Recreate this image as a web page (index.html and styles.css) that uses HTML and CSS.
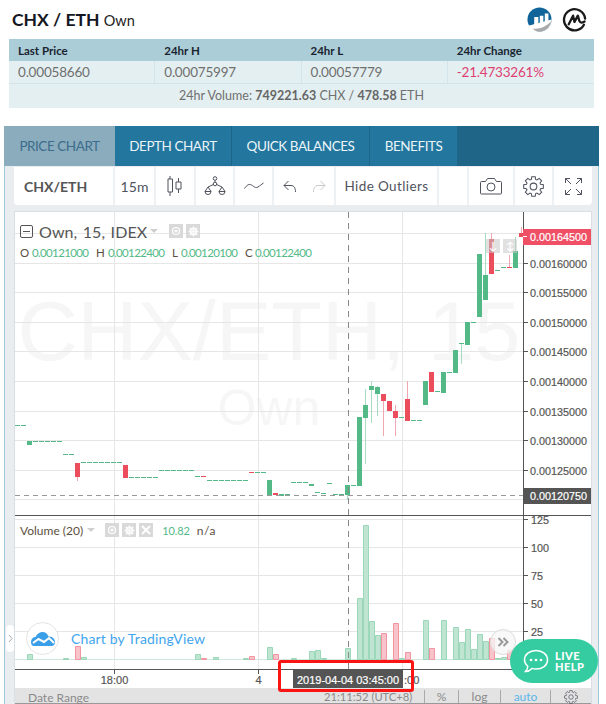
FILE: index.html
```html
<!DOCTYPE html>
<html lang="en">
<head>
<meta charset="utf-8">
<title>CHX / ETH</title>
<link rel="stylesheet" href="styles.css">
</head>
<body>
<svg class="defs" width="0" height="0" aria-hidden="true">
  <symbol id="gear" viewBox="-10 -10 20 20">
    <path d="M6.7-2.05 9.36-1.65 9.36 1.65 6.7 2.05 6.19 3.29 7.78 5.45 5.45 7.78 3.29 6.19 2.05 6.7 1.65 9.36-1.65 9.36-2.05 6.7-3.29 6.19-5.45 7.78-7.78 5.45-6.19 3.29-6.7 2.05-9.36 1.65-9.36-1.65-6.7-2.05-6.19-3.29-7.78-5.45-5.45-7.78-3.29-6.19-2.05-6.7-1.65-9.36 1.65-9.36 2.05-6.7 3.29-6.19 5.45-7.78 7.78-5.45 6.19-3.29Z"/>
    <circle r="3.2"/>
  </symbol>
</svg>

<header class="title-bar">
  <h1 class="pair">CHX / ETH <span class="pair-name">Own</span></h1>
  <div class="logos">
    <svg class="logo" viewBox="0 0 26 26">
      <circle cx="13" cy="13" r="12.5" fill="#0f6499"/>
      <path d="M1.500 19.500 25.500 13C25.500 20 20 25.600 13 25.600 8 25.600 3.800 23.500 1.500 19.500Z" fill="#fff"/>
      <path d="M6 22.300C13 23.500 20 20.500 25.300 14.500 24 21 19 25.700 13 25.700 10 25.700 7.800 24.300 6 22.300Z" fill="#a9a9a9"/>
      <path d="M7.500 10.500h4.300v8.500h-4.300zM13.300 9h3.700v9h-3.700zM18.500 6.800h3.800v10h-3.800z" fill="#fff"/>
    </svg>
    <svg class="logo" viewBox="0 0 26 26">
      <path d="M22.800 18.500A11 11 0 1 1 24 12" fill="none" stroke="#1a1a1a" stroke-width="2.400" stroke-linecap="round"/>
      <path d="M7 18 11.500 9 13 15.500 16.500 9 18 14.500 C19 17 21 16.500 23.500 15" fill="none" stroke="#1a1a1a" stroke-width="2.400" stroke-linejoin="round" stroke-linecap="round"/>
    </svg>
  </div>
</header>

<section class="stats">
  <div class="stat-head">Last Price</div>
  <div class="stat-head">24hr H</div>
  <div class="stat-head">24hr L</div>
  <div class="stat-head">24hr Change</div>
  <div class="stat-val">0.00058660</div>
  <div class="stat-val">0.00075997</div>
  <div class="stat-val">0.00057779</div>
  <div class="stat-val stat-neg">-21.4733261%</div>
  <div class="stat-vol">24hr Volume: <b>749221.63</b> CHX / <b>478.58</b> ETH</div>
</section>

<nav class="tabs">
  <a class="tab tab-active">PRICE CHART</a>
  <a class="tab tab-depth">DEPTH CHART</a>
  <a class="tab tab-quick">QUICK BALANCES</a>
  <a class="tab tab-benefits">BENEFITS</a>
</nav>

<main class="panel">
  <div class="toolbar">
    <div class="tool tool-symbol">CHX/ETH</div>
    <div class="tool tool-interval">15m</div>
    <div class="tool tool-candle">
      <svg width="16" height="20" viewBox="0 0 16 20" class="ico"><path d="M3 0v3M3 16v4M1 3h4.500v13H1zM11.500 2v4M11.500 13v4M9 6h5v7H9z"/></svg>
    </div>
    <div class="tool tool-compare">
      <svg width="24" height="20" viewBox="0 0 24 20" class="ico"><circle cx="12" cy="2.500" r="1.800"/><circle cx="12" cy="8" r="1.800"/><path d="M12 4.300v1.900M10.400 8.500 5 11M13.600 8.500 19 11M5 11 2 15.500M5 11 8 15.500M19 11 16 15.500M19 11 22 15.500M2 15.500h6a3 3 0 0 1-6 0ZM16 15.500h6a3 3 0 0 1-6 0Z"/></svg>
    </div>
    <div class="tool tool-style">
      <svg width="20" height="8" viewBox="0 0 20 8" class="ico"><path d="M.5 6.500C3 3 5 1.500 7.500 3s4 3.500 6.500 2S17 2.500 19.500 1"/></svg>
    </div>
    <div class="tool tool-history">
      <svg width="14" height="13" viewBox="0 0 14 13" class="ico"><path d="M5.500 1 1 5.500 5.500 10M1 5.500h7c3 0 4.500 2.500 4.500 6.500"/></svg>
      <svg width="14" height="13" viewBox="0 0 14 13" class="ico ico-off"><path d="M8.500 1 13 5.500 8.500 10M13 5.500H6C3 5.500 1.500 8 1.500 12"/></svg>
    </div>
    <div class="tool tool-outliers">Hide Outliers</div>
    <div class="tool tool-blank"></div>
    <div class="tool tool-camera">
      <svg width="22" height="18" viewBox="0 0 22 18" class="ico"><path d="M1.500 4.500h4l2-3h7l2 3h4a1 1 0 0 1 1 1v10.500a1 1 0 0 1-1 1h-19a1 1 0 0 1-1-1V5.500a1 1 0 0 1 1-1Z"/><circle cx="11" cy="10" r="4"/></svg>
    </div>
    <div class="tool tool-gear">
      <svg width="21" height="21" class="ico"><use href="#gear"/></svg>
    </div>
    <div class="tool tool-full">
      <svg width="17" height="17" viewBox="0 0 17 17" class="ico"><path d="M.5 5V.5H5M.5.500 6 6M12 .5h4.500V5M16.500.5 11 6M.5 12v4.500H5M.5 16.500 6 11M16.500 12v4.500H12M16.500 16.500 11 11"/></svg>
    </div>
  </div>

  <div class="chart">
    <svg class="plot" width="576" height="477" viewBox="15 212 576 477">
      <text class="wm wm-big" x="269" y="360">CHX/ETH, 15</text>
      <text class="wm wm-small" x="269" y="425">Own</text>

      <path class="grid" d="M15 233h508v1H15zM15 263h508v1H15zM15 292h508v1H15zM15 322h508v1H15zM15 351h508v1H15zM15 381h508v1H15zM15 411h508v1H15zM15 440h508v1H15zM15 470h508v1H15zM15 499h508v1H15zM15 519h508v1H15zM15 547h508v1H15zM15 575h508v1H15zM15 603h508v1H15zM15 631h508v1H15zM114 212h1v457h-1zM258 212h1v457h-1zM402 212h1v457h-1z"/>

      <path class="vol-flat" d="M15 659.500h512"/>
      <path class="vol-g" d="M27.500 654.500h5v5h-5zM63.500 658.500h5v1h-5zM81.500 657.500h5v2h-5zM195.500 654.500h5v5h-5zM213.500 657.500h5v2h-5zM243.500 658.500h5v1h-5zM267.500 647.500h5v12h-5zM291.500 658.500h5v1h-5zM309.500 651.500h5v8h-5zM315.500 650.500h5v9h-5zM321.500 658.500h5v1h-5zM345.500 648.500h5v11h-5zM357.500 598.500h5v61h-5zM363.500 525.500h5v134h-5zM369.500 621.500h5v38h-5zM375.500 635.500h5v24h-5zM399.500 658.500h5v1h-5zM423.500 620.500h5v39h-5zM441.500 620.500h5v39h-5zM453.500 627.500h5v32h-5zM459.500 642.500h5v17h-5zM465.500 629.500h5v30h-5zM471.500 649.500h5v10h-5zM477.500 634.500h5v25h-5zM483.500 641.500h5v18h-5zM495.500 658.500h5v1h-5zM501.500 657.500h5v2h-5z"/>
      <path class="vol-r" d="M75.500 646.500h5v13h-5zM201.500 658.500h5v1h-5zM249.500 656.500h5v3h-5zM273.500 654.500h5v5h-5zM381.500 633.500h5v26h-5zM393.500 623.500h5v36h-5zM405.500 652.500h5v7h-5zM429.500 648.500h5v11h-5zM489.500 638.500h5v21h-5zM507.500 650.500h5v9h-5z"/>

      <path class="wick-g" d="M347 495h1v5h-1zM365 389h1v75h-1zM371 381h1v42h-1zM377 386h1v30h-1zM461 343h1v21h-1zM485 233h1v42h-1zM515 237h1v14h-1z"/>
      <path class="wick-r" d="M383 394h1v42h-1zM395 405h1v31h-1zM407 381h1v18h-1zM491 233h1v6h-1zM509 255h1v12h-1zM521 227h1v6h-1zM77 477h1v4h-1z"/>

      <path class="up" d="M15 425h5v1h-5zM21 425h5v1h-5zM27 441h5v4h-5zM33 441h5v1h-5zM39 441h5v1h-5zM45 441h5v1h-5zM51 441h5v1h-5zM57 441h5v1h-5zM63 454h5v1h-5zM69 454h5v1h-5zM81 462h5v1h-5zM87 462h5v1h-5zM93 462h5v1h-5zM99 462h5v1h-5zM105 462h5v1h-5zM111 462h5v1h-5zM117 462h5v1h-5zM129 477h5v1h-5zM135 477h5v1h-5zM141 477h5v1h-5zM147 477h5v1h-5zM153 477h5v1h-5zM159 470h5v1h-5zM165 470h5v1h-5zM171 470h5v1h-5zM177 470h5v1h-5zM183 470h5v1h-5zM189 470h5v1h-5zM195 476h5v1h-5zM207 480h5v1h-5zM213 480h5v1h-5zM219 480h5v1h-5zM225 480h5v1h-5zM231 480h5v1h-5zM237 480h5v1h-5zM243 480h5v1h-5zM255 472h5v1h-5zM261 472h5v1h-5zM267 480h5v15h-5zM279 494h5v2h-5zM285 494h5v1h-5zM291 482h5v1h-5zM297 482h5v1h-5zM303 482h5v1h-5zM309 484h5v2h-5zM315 492h5v1h-5zM321 493h5v1h-5zM327 483h5v1h-5zM333 494h5v1h-5zM339 494h5v1h-5zM345 485h5v10h-5zM351 485h5v1h-5zM357 417h5v69h-5zM363 405h5v13h-5zM369 386h5v4h-5zM375 387h5v7h-5zM399 417h5v1h-5zM411 420h5v1h-5zM417 420h5v1h-5zM423 381h5v24h-5zM435 391h5v1h-5zM441 372h5v21h-5zM447 372h5v1h-5zM453 350h5v23h-5zM459 343h5v1h-5zM465 322h5v23h-5zM471 322h5v1h-5zM477 254h5v63h-5zM483 275h5v25h-5zM495 270h5v1h-5zM501 267h5v1h-5zM513 251h5v17h-5z"/>
      <path class="down" d="M75 463h5v14h-5zM123 465h5v13h-5zM201 476h5v1h-5zM249 472h5v1h-5zM273 493h5v2h-5zM381 394h5v7h-5zM387 401h5v10h-5zM393 411h5v7h-5zM405 399h5v22h-5zM429 372h5v20h-5zM489 239h5v35h-5zM507 267h5v1h-5zM519 233h5v4h-5z"/>

      <path class="dash-h" d="M15 495.500h508"/>
      <path class="dash-v" d="M348.500 212v457"/>

      <path class="axis" d="M15 515h576v1H15zM15 669h508v1H15zM523 212h1v458h-1z"/>
      <path class="axis" d="M524 263h4v1h-4zM524 292h4v1h-4zM524 322h4v1h-4zM524 351h4v1h-4zM524 381h4v1h-4zM524 411h4v1h-4zM524 440h4v1h-4zM524 470h4v1h-4zM524 519h4v1h-4zM524 547h4v1h-4zM524 575h4v1h-4zM524 603h4v1h-4zM524 631h4v1h-4zM114 670h1v4h-1zM258 670h1v4h-1z"/>

      <text class="ax-price" x="530" y="267.500">0.00160000</text>
      <text class="ax-price" x="530" y="296.500">0.00155000</text>
      <text class="ax-price" x="530" y="326.500">0.00150000</text>
      <text class="ax-price" x="530" y="355.500">0.00145000</text>
      <text class="ax-price" x="530" y="385.500">0.00140000</text>
      <text class="ax-price" x="530" y="415.500">0.00135000</text>
      <text class="ax-price" x="530" y="444.500">0.00130000</text>
      <text class="ax-price" x="530" y="474.500">0.00125000</text>
      <rect class="tag-red" x="523" y="229" width="68" height="16"/>
      <path class="tag-tick" d="M523 236h4v1h-4z"/>
      <text class="ax-price ax-light" x="530" y="241">0.00164500</text>
      <rect class="tag-dark" x="523" y="488" width="68" height="16"/>
      <text class="ax-price ax-light" x="530" y="500">0.00120750</text>

      <text class="ax-price" x="531" y="524">125</text>
      <text class="ax-price" x="531" y="552">100</text>
      <text class="ax-price" x="531" y="580">75</text>
      <text class="ax-price" x="531" y="608">50</text>
      <text class="ax-price" x="531" y="636">25</text>

      <text class="ax-time" x="114.500" y="684">18:00</text>
      <text class="ax-time" x="258.500" y="684">4</text>
      <text class="ax-time ax-start" x="404" y="684">:00</text>
      <rect class="tag-dark" x="293" y="670" width="110" height="18"/>
      <text class="ax-time ax-light" x="348" y="684">2019-04-04 03:45:00</text>
    </svg>

    <div class="legend-main">
      <span class="collapse"></span>
      <span class="legend-title">Own, 15, IDEX</span>
      <span class="caret"></span>
      <span class="chip"><svg width="10" height="10" viewBox="0 0 10 10"><circle cx="5" cy="5" r="3.500" class="chip-ring"/><circle cx="5" cy="5" r="1.500" class="chip-dot"/></svg></span>
      <span class="chip"><svg width="11" height="11" class="chip-gear"><use href="#gear"/></svg></span>
    </div>
    <div class="ohlc">
      <span class="ohlc-k ohlc-o">O</span><span class="ohlc-v">0.00121000</span>
      <span class="ohlc-k ohlc-h">H</span><span class="ohlc-v">0.00122400</span>
      <span class="ohlc-k ohlc-l">L</span><span class="ohlc-v">0.00120100</span>
      <span class="ohlc-k ohlc-c">C</span><span class="ohlc-v">0.00122400</span>
    </div>

    <div class="pane-btns">
      <span class="pane-btn">↓</span><span class="pane-btn">↕</span>
    </div>

    <div class="legend-vol">
      <span class="vol-title">Volume (20)</span>
      <span class="caret"></span>
      <span class="chip chip-s"><svg width="10" height="10" viewBox="0 0 10 10"><circle cx="5" cy="5" r="3.500" class="chip-ring"/><circle cx="5" cy="5" r="1.500" class="chip-dot"/></svg></span>
      <span class="chip chip-s"><svg width="11" height="11" class="chip-gear"><use href="#gear"/></svg></span>
      <span class="chip chip-s"><svg width="10" height="10" viewBox="0 0 10 10" class="chip-x"><path d="M1 1 9 9M9 1 1 9"/></svg></span>
      <span class="vol-num">10.82</span>
      <span class="vol-na">n/a</span>
    </div>

    <div class="tv-badge">
      <span class="tv-logo">
        <svg width="26" height="16" viewBox="0 0 26 16"><path d="M1 11c0-3 2-5 4.500-5C7 2.500 10 1 12.500 1c3 0 5 2 6 4.500 3.500 0 6.500 2 6.500 5.500 0 2.500-1.500 4-3.500 4H4C2 15 1 13.500 1 11Z" fill="#3a9fe8"/><path d="M3 12 8.500 8 14 11 19 7 24 12" fill="none" stroke="#fff" stroke-width="2"/></svg>
      </span>
      <span class="tv-text">Chart by TradingView</span>
    </div>

    <div class="scroll-btn">
      <svg width="12" height="10" viewBox="0 0 12 10"><path d="M1.500 1 5.500 5 1.500 9M6.500 1 10.500 5 6.500 9"/></svg>
    </div>

    <footer class="bottom-bar">
      <span class="range">Date Range</span>
      <span class="clock">21:11:52 (UTC+8)</span>
      <span class="bb-item bb-pct">%</span>
      <span class="bb-item bb-log">log</span>
      <span class="bb-item bb-auto">auto</span>
      <span class="bb-item bb-gear"><svg width="14" height="14" class="ico"><use href="#gear"/></svg></span>
    </footer>
  </div>
</main>

<div class="handle">
  <svg width="5" height="9" viewBox="0 0 5 9"><path d="M1 1 4 4.500 1 8"/></svg>
</div>

<div class="focus-box"></div>

<div class="live-help">
  <svg width="26" height="24" viewBox="0 0 26 24"><path d="M13 1.500c6.500 0 11.500 4 11.500 9.500S19.500 20 13 20c-1.500 0-3-.2-4-.6C7.500 21 5 22.500 2.500 22.500 4 21 4.800 19 4.800 17.300 2.800 15.500 1.500 13.400 1.500 11 1.500 5.500 6.500 1.500 13 1.500Z" fill="none" stroke="#fff" stroke-width="1.500"/><circle cx="8" cy="11" r="1.300" fill="#fff"/><circle cx="13" cy="11" r="1.300" fill="#fff"/><circle cx="18" cy="11" r="1.300" fill="#fff"/></svg>
  <span class="live-text">LIVE<br>HELP</span>
</div>
</body>
</html>
```
FILE: styles.css
```css
* { box-sizing: border-box; }
html, body { margin: 0; height: 704px; overflow: hidden; background: #fff; }
body { font-family: Lato, "Liberation Sans", sans-serif; color: #333; position: relative; }
.defs { position: absolute; }

.title-bar { height: 39px; display: flex; align-items: center; justify-content: space-between; padding: 0 19px 0 12px; }
.pair { margin: 0; font-size: 17.500px; font-weight: 700; color: #131722; line-height: 1; }
.pair-name { font-size: 14.500px; font-weight: 400; margin-left: 0; color: #222; }
.logos { display: flex; gap: 10px; }
.logo { width: 25px; height: 25px; display: block; }

.stats { margin: 0 12px 0 9px; display: grid; grid-template-columns: repeat(4, 1fr); grid-template-rows: 22px 23px 24px; background: #e4eff1; }
.stat-head { background: #abcdd7; color: #1a2430; font-size: 11.500px; font-weight: 700; display: flex; align-items: center; padding-left: 9px; }
.stat-val { font-size: 13.500px; letter-spacing: -.2px; color: #6f6f6f; display: flex; align-items: center; padding-left: 9px; border-right: 1px solid #d3e4ea; border-bottom: 1px solid #d3e4ea; }
.stat-val:nth-child(8) { border-right: 0; }
.stat-neg { color: #df3f73; }
.stat-vol { grid-column: 1 / -1; font-size: 12.500px; line-height: 24px; text-align: center; color: #6f6f6f; }
.stat-vol b { color: #666; }

.tabs { margin: 18px 7px 0 4px; height: 40px; background: #1f6587; display: flex; }
.tab { font-size: 13.500px; letter-spacing: -.45px; display: flex; align-items: center; justify-content: center; color: #eaf4f8; background: #23769e; border-right: 1px solid #1f6587; }
.tab-active { width: 111px; background: #8aacbd; color: #3c6c8c; border-right: 0; }
.tab-depth { width: 117px; }
.tab-quick { width: 138px; }
.tab-benefits { width: 87px; border-right: 0; }

.panel { margin: 0 7px 0 4px; height: 538px; background: #e9edf0; border-left: 1px solid #9cc8d8; border-right: 1px solid #9cc8d8; padding: 1px 6px 0 9px; }
.toolbar { height: 38px; background: #fff; border-radius: 0 0 4px 4px; display: flex; font-size: 14px; color: #50535e; }
.tool { display: flex; align-items: center; justify-content: center; border-right: 2px solid #eef1f3; flex: none; }
.tool-symbol { width: 101px; font-weight: 700; color: #555; justify-content: flex-start; padding-left: 10px; }
.tool-interval { width: 41px; letter-spacing: .1px; }
.tool-candle { width: 40px; }
.tool-compare { width: 39px; }
.tool-style { width: 39px; }
.tool-history { width: 62px; gap: 15px; }
.tool-outliers { width: 103px; font-size: 13.500px; letter-spacing: .4px; }
.tool-blank { width: 30px; }
.tool-camera { width: 46px; }
.tool-gear { width: 39px; }
.tool-full { width: 38px; border-right: 0; }
.ico { fill: none; stroke: #50535e; stroke-width: 1; display: block; }
.ico-off { stroke: #c8c9cd; }

.chart { margin-top: 6px; position: relative; border: 1px solid #dadfe3; background: #fff; height: 494px; }
.plot { display: block; shape-rendering: crispEdges; }
.plot text { shape-rendering: auto; }
.wm { font-family: "Liberation Sans", Arial, sans-serif; fill: #f6f6f6; text-anchor: middle; }
.wm-big { font-size: 83px; }
.wm-small { font-size: 50px; }
.grid { fill: #e6e6e6; }
.vol-g { fill: #bfe5d2; stroke: #9ad8b9; stroke-width: 1; shape-rendering: geometricPrecision; }
.vol-r { fill: #f8c3ca; stroke: #f195a1; stroke-width: 1; shape-rendering: geometricPrecision; }
.vol-flat { stroke: #cfe9dc; stroke-width: 1; }
.wick-g { fill: #a8dcc2; }
.wick-r { fill: #f1a7b0; }
.up { fill: #53b987; }
.down { fill: #eb4d5c; }
.dash-h { stroke: #999; stroke-dasharray: 5 4; fill: none; }
.dash-v { stroke: #888; stroke-dasharray: 6 5; fill: none; }
.axis { fill: #555; }
.ax-price { font-family: "Liberation Sans", Arial, sans-serif; font-size: 10.800px; fill: #555; stroke: #555; stroke-width: .2px; }
.ax-time { font-family: "Liberation Sans", Arial, sans-serif; font-size: 11px; fill: #555; text-anchor: middle; stroke: #555; stroke-width: .2px; }
.ax-start { text-anchor: start; }
.ax-light { fill: #fff; stroke: #fff; }
.tag-red { fill: #ef5066; }
.tag-tick { fill: #fff; }
.tag-dark { fill: #555; }

.legend-main { position: absolute; left: 5px; top: 10px; display: flex; align-items: center; height: 18px; }
.collapse { width: 13px; height: 13px; border: 1px solid #555; border-radius: 2px; position: relative; margin-right: 6px; }
.collapse::after { content: ""; position: absolute; left: 2px; right: 2px; top: 5px; height: 1px; background: #555; }
.legend-title { font-size: 16px; color: #555; letter-spacing: .1px; word-spacing: 1.200px; }
.caret { width: 0; height: 0; border-left: 4px solid transparent; border-right: 4px solid transparent; border-top: 4px solid #cfcfcf; margin: 0 11px 0 3px; }
.chip { width: 14px; height: 14px; background: #d9d9d9; margin-right: 3px; display: flex; align-items: center; justify-content: center; }
.chip-ring { fill: none; stroke: #fff; stroke-width: 1.200; }
.chip-dot { fill: #fff; }
.chip-gear { fill: #fff; stroke: #d9d9d9; stroke-width: 1; }
.chip-x { stroke: #fff; stroke-width: 2; fill: none; }
.ohlc { position: absolute; left: 5px; top: 33px; display: flex; font-size: 11.500px; line-height: 15px; letter-spacing: -.65px; white-space: nowrap; }
.ohlc-k { color: #5c5040; letter-spacing: 0; }
.ohlc-o { width: 12px; }
.ohlc-h { width: 12px; }
.ohlc-l { width: 9px; }
.ohlc-c { width: 10px; }
.ohlc-v { color: #53b987; width: 64px; }
.pane-btns { position: absolute; left: 471px; top: 27px; display: flex; gap: 3px; }
.pane-btn { width: 14px; height: 14px; background: rgba(200, 200, 200, .55); color: #fff; font-size: 11px; line-height: 14px; text-align: center; font-weight: 700; }
.legend-vol { position: absolute; left: 5px; top: 310px; display: flex; align-items: center; height: 16px; font-size: 12px; color: #5c5040; }
.legend-vol .caret { margin: 0 10px 0 4px; }
.chip-s { margin-right: 3px; }
.vol-num { color: #53b987; margin-left: 6px; font-size: 11px; letter-spacing: -.1px; }
.vol-na { margin-left: 7px; letter-spacing: .5px; }

.tv-badge { position: absolute; left: 11px; top: 410px; display: flex; align-items: center; }
.tv-logo { width: 33px; height: 33px; border-radius: 50%; border: 1px solid #e4e4e4; background: #fff; display: flex; align-items: center; justify-content: center; margin-right: 12px; }
.tv-text { font-size: 14px; color: #3fa5ee; letter-spacing: .15px; }
.scroll-btn { position: absolute; left: 475px; top: 417px; width: 26px; height: 26px; border-radius: 50%; border: 1px solid #dcdcdc; background: rgba(245, 245, 245, .75); display: flex; align-items: center; justify-content: center; }
.scroll-btn svg { fill: none; stroke: #999; stroke-width: 2; }

.bottom-bar { position: absolute; left: 0; right: 0; top: 476px; height: 16px; background: #e3e3e3; border-bottom: 1px solid #999; font-size: 12px; color: #8a8a8a; }
.range { position: absolute; left: 13px; top: 2px; }
.clock { position: absolute; left: 309px; top: 2px; font-size: 11.200px; line-height: 14px; }
.bb-item { position: absolute; top: 2px; height: 13px; line-height: 13px; text-align: center; border-left: 1px solid #aaa; }
.bb-pct { left: 409px; width: 34px; }
.bb-log { left: 443px; width: 42px; }
.bb-auto { left: 485px; width: 50px; color: #5ab6e8; }
.bb-gear { left: 535px; width: 41px; display: flex; justify-content: center; }

.handle { position: absolute; left: 6px; top: 625px; width: 8px; height: 27px; background: #fff; border-radius: 4px; display: flex; align-items: center; justify-content: center; }
.handle svg { fill: none; stroke: #aaa; stroke-width: 1; }
.focus-box { position: absolute; left: 278px; top: 660px; width: 136px; height: 32px; border: 3.500px solid #fb1414; border-radius: 3px; }
.live-help { position: absolute; left: 510px; top: 639px; width: 88px; height: 44px; border-radius: 22px; background: #36cca1; display: flex; align-items: center; padding-left: 13px; gap: 6px; }
.live-text { color: #fff; font-size: 11px; font-weight: 900; line-height: 11.500px; letter-spacing: .5px; }
```
